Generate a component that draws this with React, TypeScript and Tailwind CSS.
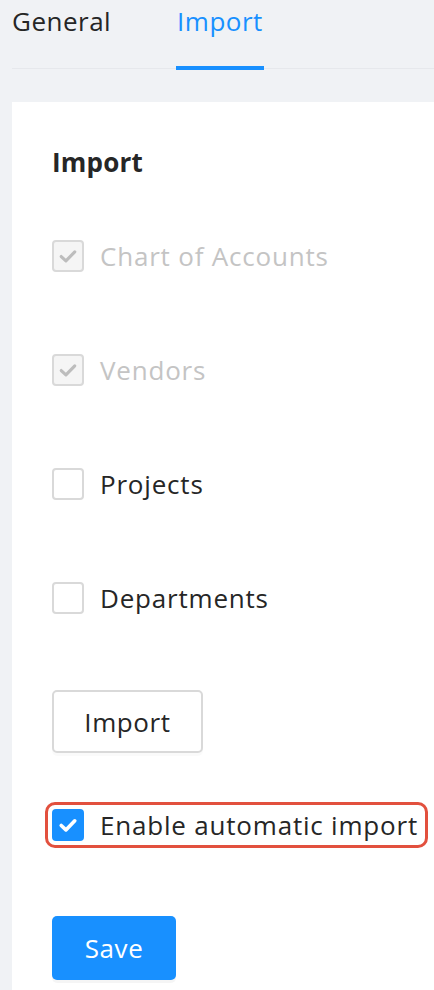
import React from "react";

const font = { fontFamily: "'Open Sans', Lato, sans-serif" };

function Check({ color, size = 26, width = 2.4 }: { color: string; size?: number; width?: number }) {
  return (
    <svg width={size} height={size} viewBox="0 0 20 20" fill="none">
      <path d="M4.8 10.4 L8.4 13.8 L15.2 6.8" stroke={color} strokeWidth={width} strokeLinecap="round" strokeLinejoin="round" />
    </svg>
  );
}

function Row({ label, state }: { label: string; state: "disabled" | "empty" | "checked" }) {
  return (
    <div className="flex items-center h-8 gap-4">
      {state === "disabled" && (
        <div className="w-8 h-8 shrink-0 rounded-[4px] border-2 border-[#d9d9d9] bg-[#f5f5f5] flex items-center justify-center">
          <Check color="#bdbdbd" />
        </div>
      )}
      {state === "empty" && <div className="w-8 h-8 shrink-0 rounded-[4px] border-2 border-[#d9d9d9] bg-white" />}
      {state === "checked" && (
        <div className="w-8 h-8 shrink-0 rounded-[4px] bg-[#1890ff] flex items-center justify-center">
          <Check color="#ffffff" width={2.8} />
        </div>
      )}
      <span
        className={
          "text-[26px] leading-8 tracking-[0.8px] whitespace-nowrap " +
          (state === "disabled" ? "text-[#c4c4c4]" : "text-[#262626]")
        }
      >
        {label}
      </span>
    </div>
  );
}

export default function App() {
  return (
    <div className="w-full min-h-[990px] bg-[#f0f2f5] overflow-hidden" style={font}>
      <div className="ml-3 h-[69px] border-b border-[#e6e8ec] flex items-start">
        <div className="w-[164px] pt-[1px] text-[26px] leading-10 tracking-[0.5px] text-[#262626]">General</div>
        <div className="relative w-[88px] h-full pt-[1px] text-[26px] leading-10 tracking-[0.5px] text-[#1890ff] text-center">
          Import
          <div className="absolute left-0 right-0 bottom-[-2px] h-[4px] bg-[#1890ff]" />
        </div>
      </div>
      <div className="mt-[33px] ml-3 bg-white pl-10 pt-[44px] pb-10 min-h-[900px]">
        <div className="text-[26px] leading-8 font-bold tracking-[0.2px] text-[#262626]">Import</div>
        <div className="mt-[62px] flex flex-col gap-[82px]">
          <Row label="Chart of Accounts" state="disabled" />
          <Row label="Vendors" state="disabled" />
          <Row label="Projects" state="empty" />
          <Row label="Departments" state="empty" />
        </div>
        <button className="mt-[76px] w-[151px] h-[63px] rounded-[5px] border-2 border-[#d9d9d9] bg-white text-[26px] leading-8 tracking-[0.6px] text-[#262626] shadow-[0_3px_0_rgba(0,0,0,0.02)] flex items-center justify-center">
          Import
        </button>
        <div className="mt-[49px] -ml-[7px] w-[383px] h-[46px] border-[3px] border-[#e2503e] rounded-[10px] flex items-center pl-[4px]">
          <Row label="Enable automatic import" state="checked" />
        </div>
        <button className="mt-[68px] w-[124px] h-[64px] rounded-[5px] bg-[#1890ff] text-white text-[26px] leading-8 tracking-[0.6px] shadow-[0_3px_0_rgba(0,0,0,0.04)] flex items-center justify-center">
          Save
        </button>
      </div>
    </div>
  );
}
